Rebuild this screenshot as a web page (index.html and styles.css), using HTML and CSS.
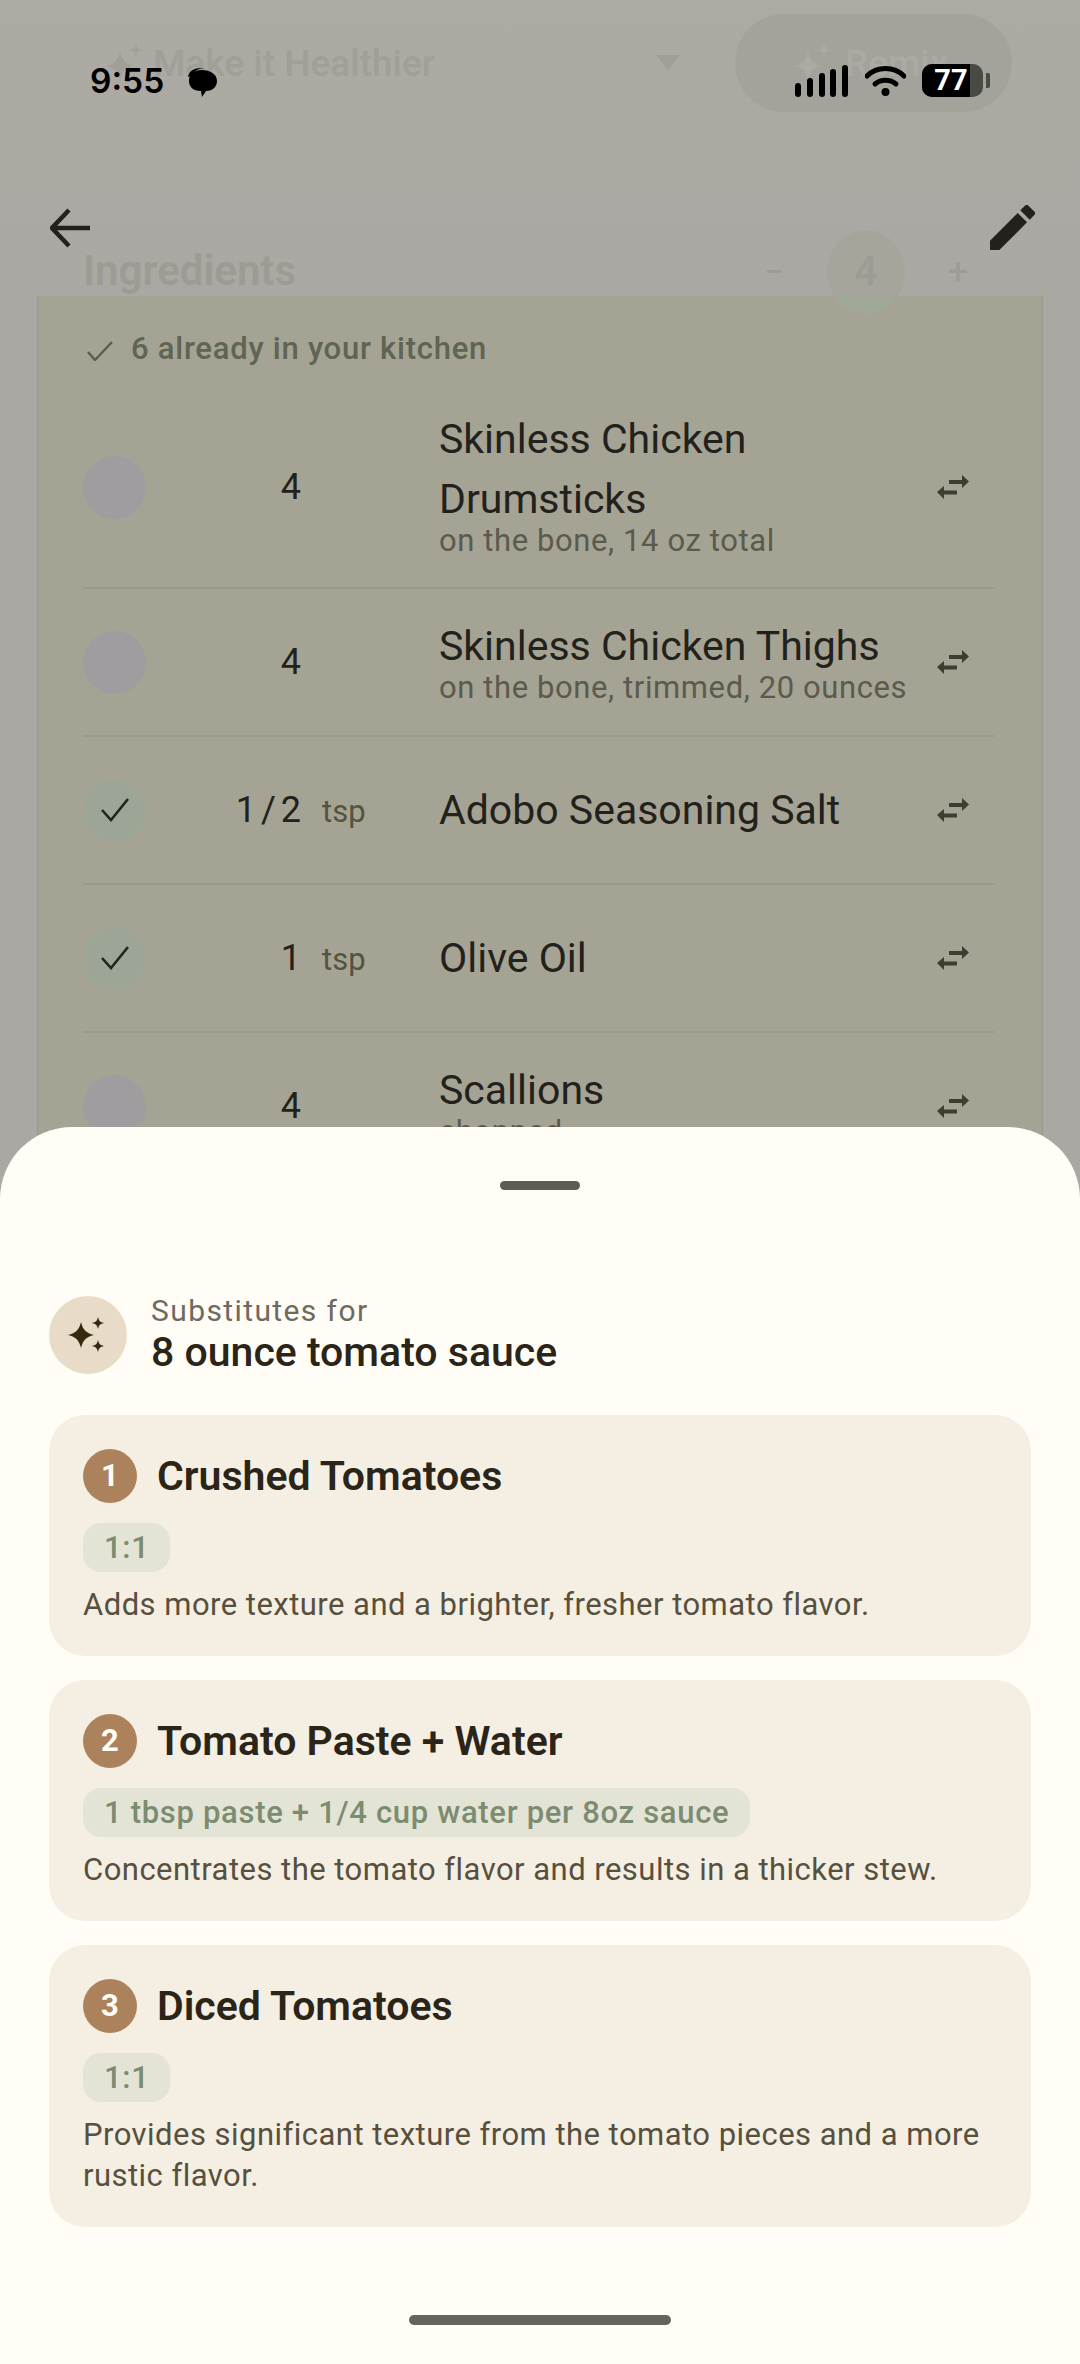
FILE: index.html
```html
<!DOCTYPE html>
<html>
<head>
  <meta charset="UTF-8">
  <title>Substitutes</title>
  <link rel="stylesheet" href="styles.css">
</head>
<body>

<div class="page">

  <div class="status">
    <span class="time">9:55</span>
    <svg class="bubble" viewBox="0 0 30 30"><path d="M1 9C2 3 7 0 14 0h5c-7 0-13 3-14 8z" fill="#000"/><path d="M15 2c8 0 15 4 15 11s-6 10-11 10l-4 6-1-6C6 23 2 19 2 13 2 6 7 2 15 2z" fill="#000"/></svg>
    <div class="status-right">
      <svg class="signal" viewBox="0 0 57 32"><g fill="#000"><rect x="0" y="18" width="6" height="14" rx="3"/><rect x="12" y="13" width="6" height="19" rx="3"/><rect x="24" y="8" width="6" height="24" rx="3"/><rect x="35" y="4" width="6" height="28" rx="3"/><rect x="47" y="0" width="6" height="32" rx="3"/></g></svg>
      <svg class="wifi" viewBox="0 0 41 32"><path d="M2 11C12 1 29 1 39 11" fill="none" stroke="#000" stroke-width="5" stroke-linecap="round"/><path d="M10 19c6-5 15-5 21 0" fill="none" stroke="#000" stroke-width="5" stroke-linecap="round"/><circle cx="20.5" cy="27" r="4" fill="#000"/></svg>
      <div class="battery"><span class="battery-level">77</span></div>
      <div class="battery-nub"></div>
    </div>
  </div>

  <div class="topbar">
    <svg class="back" viewBox="0 0 40 40"><path d="M19 2 2 20l17 18M2 20h38" fill="none" stroke="#23211b" stroke-width="4.500"/></svg>
    <svg class="edit" viewBox="3 3 18 18"><path fill="#23211b" d="M3 17.25V21h3.75L17.81 9.94l-3.75-3.75L3 17.25zM20.71 7.04a1 1 0 0 0 0-1.41l-2.34-2.34a1 1 0 0 0-1.41 0l-1.83 1.83 3.75 3.75 1.83-1.83z"/></svg>
  </div>

  <div class="actions">
    <div class="make">
      <svg class="ghost-star" viewBox="0 0 40 40"><path d="M15 8c2 10 5 13 14 15-9 2-12 5-14 15-2-10-5-13-14-15 9-2 12-5 14-15zM31 0c1 5 2 6 7 7-5 1-6 2-7 7-1-5-2-6-7-7 5-1 6-2 7-7z"/></svg>
      <span>Make it Healthier</span>
      <i class="tri"></i>
    </div>
    <div class="remix">
      <svg class="ghost-star" viewBox="0 0 40 40"><path d="M15 8c2 10 5 13 14 15-9 2-12 5-14 15-2-10-5-13-14-15 9-2 12-5 14-15zM31 0c1 5 2 6 7 7-5 1-6 2-7 7-1-5-2-6-7-7 5-1 6-2 7-7z"/></svg>
      <span>Remix</span>
    </div>
  </div>

  <div class="ing-head">
    <h2>Ingredients</h2>
    <div class="stepper">
      <span class="step">−</span>
      <span class="count">4</span>
      <span class="step">+</span>
    </div>
  </div>

  <div class="ing-card">
    <div class="kitchen">
      <svg class="tick-small" viewBox="0 0 26 20"><path d="M1 11l7 8L25 1" fill="none" stroke="#5a5f4e" stroke-width="2.400"/></svg>
      <span>6 already in your kitchen</span>
    </div>

    <div class="row row-tall">
      <div class="circle"></div>
      <div class="qty"><b>4</b></div>
      <div class="name">Skinless Chicken Drumsticks<small>on the bone, 14 oz total</small></div>
      <svg class="swap" viewBox="0 0 32 24"><path fill="#3f3d31" d="M12 5h13V0l7 6.500-7 6.500V9H12zM20 15.500H7V11l-7 6 7 7v-4.500h13z"/></svg>
    </div>
    <div class="row">
      <div class="circle"></div>
      <div class="qty"><b>4</b></div>
      <div class="name">Skinless Chicken Thighs<small>on the bone, trimmed, 20 ounces</small></div>
      <svg class="swap" viewBox="0 0 32 24"><path fill="#3f3d31" d="M12 5h13V0l7 6.500-7 6.500V9H12zM20 15.500H7V11l-7 6 7 7v-4.500h13z"/></svg>
    </div>
    <div class="row">
      <div class="circle done"><svg viewBox="0 0 28 24"><path d="M1 12l9 10L27 1" fill="none" stroke="#23241c" stroke-width="2.600"/></svg></div>
      <div class="qty"><b>1 / 2</b><em>tsp</em></div>
      <div class="name">Adobo Seasoning Salt</div>
      <svg class="swap" viewBox="0 0 32 24"><path fill="#3f3d31" d="M12 5h13V0l7 6.500-7 6.500V9H12zM20 15.500H7V11l-7 6 7 7v-4.500h13z"/></svg>
    </div>
    <div class="row">
      <div class="circle done"><svg viewBox="0 0 28 24"><path d="M1 12l9 10L27 1" fill="none" stroke="#23241c" stroke-width="2.600"/></svg></div>
      <div class="qty"><b>1</b><em>tsp</em></div>
      <div class="name">Olive Oil</div>
      <svg class="swap" viewBox="0 0 32 24"><path fill="#3f3d31" d="M12 5h13V0l7 6.500-7 6.500V9H12zM20 15.500H7V11l-7 6 7 7v-4.500h13z"/></svg>
    </div>
    <div class="row">
      <div class="circle"></div>
      <div class="qty"><b>4</b></div>
      <div class="name">Scallions<small>chopped</small></div>
      <svg class="swap" viewBox="0 0 32 24"><path fill="#3f3d31" d="M12 5h13V0l7 6.500-7 6.500V9H12zM20 15.500H7V11l-7 6 7 7v-4.500h13z"/></svg>
    </div>
  </div>

  <div class="sheet">
    <div class="handle"></div>

    <div class="sheet-head">
      <div class="spark">
        <svg viewBox="0 0 40 36"><path fill="#38280f" d="M13 5c2 8 5 11 13 13-8 2-11 5-13 13-2-8-5-11-13-13 8-2 11-5 13-13zM30 0c1 4 2 5 6 6-4 1-5 2-6 6-1-4-2-5-6-6 4-1 5-2 6-6zM30 23c1 4 2 5 6 6-4 1-5 2-6 6-1-4-2-5-6-6 4-1 5-2 6-6z"/></svg>
      </div>
      <div>
        <div class="for">Substitutes for</div>
        <div class="what">8 ounce tomato sauce</div>
      </div>
    </div>

    <div class="sub">
      <div class="sub-title"><span class="num">1</span><h3>Crushed Tomatoes</h3></div>
      <span class="chip">1:1</span>
      <p>Adds more texture and a brighter, fresher tomato flavor.</p>
    </div>
    <div class="sub">
      <div class="sub-title"><span class="num">2</span><h3>Tomato Paste + Water</h3></div>
      <span class="chip">1 tbsp paste + 1/4 cup water per 8oz sauce</span>
      <p>Concentrates the tomato flavor and results in a thicker stew.</p>
    </div>
    <div class="sub">
      <div class="sub-title"><span class="num">3</span><h3>Diced Tomatoes</h3></div>
      <span class="chip">1:1</span>
      <p>Provides significant texture from the tomato pieces and a more rustic flavor.</p>
    </div>

    <div class="home"></div>
  </div>

</div>

</body>
</html>
```

FILE: styles.css
```css
* {
  box-sizing: border-box;
}
body {
  margin: 0;
  font-family: Roboto, "Noto Sans", sans-serif;
}
.page {
  position: relative;
  width: 1080px;
  height: 2364px;
  overflow: hidden;
  background: linear-gradient(#acaaa3, #a9a8a2 320px);
}

/* status bar and toolbar sit over the scrolled content */
.status {
  position: absolute;
  top: 64px;
  left: 90px;
  width: 900px;
  height: 33px;
  z-index: 2;
  display: flex;
  align-items: center;
}
.time {
  font-family: Inter, Roboto, sans-serif;
  font-size: 33.500px;
  font-weight: 600;
  color: #000;
}
.bubble {
  width: 30px;
  height: 30px;
  margin-left: 23px;
  margin-top: 4px;
}
.status-right {
  margin-left: auto;
  display: flex;
  align-items: center;
}
.signal {
  width: 57px;
  height: 32px;
}
.wifi {
  width: 41px;
  height: 32px;
  margin-left: 13px;
}
.battery {
  width: 61px;
  height: 33px;
  margin-left: 16px;
  border-radius: 10px;
  overflow: hidden;
  background: #4a4a45;
}
.battery-level {
  display: block;
  width: 48px;
  height: 33px;
  background: #000;
  color: #fff;
  font-size: 29px;
  font-weight: 700;
  line-height: 33px;
  text-align: center;
  padding-left: 10px;
}
.battery-nub {
  width: 4px;
  height: 15px;
  margin-left: 3px;
  background: #4a4a45;
  border-radius: 0 2px 2px 0;
}
.topbar {
  position: absolute;
  top: 205px;
  left: 50px;
  width: 985px;
  z-index: 2;
  display: flex;
  justify-content: space-between;
  align-items: center;
}
.back {
  width: 40px;
  height: 40px;
}
.edit {
  width: 45px;
  height: 45px;
}

/* faded page behind the scrim */
.actions {
  height: 232px;
  padding: 14px 68px 0 105px;
  display: flex;
  justify-content: space-between;
  align-items: flex-start;
}
.make, .remix {
  display: flex;
  align-items: center;
  height: 98px;
  font-size: 37px;
  font-weight: 500;
  color: #a09f98;
}
.make {
  width: 575px;
}
.make span {
  margin-left: 8px;
}
.tri {
  margin-left: auto;
  width: 0;
  height: 0;
  border-left: 12px solid transparent;
  border-right: 12px solid transparent;
  border-top: 16px solid #a09f98;
}
.ghost-star {
  width: 40px;
  height: 40px;
  fill: #a09f98;
}
.remix {
  width: 277px;
  padding-left: 58px;
  border-radius: 49px;
  background: #a4a39b;
  color: #abaaa3;
}
.remix span {
  margin-left: 12px;
}
.remix .ghost-star {
  fill: #abaaa3;
}
.ing-head {
  position: relative;
  z-index: 1;
  height: 64px;
  padding: 8px 97px 0 83px;
  display: flex;
  justify-content: space-between;
  align-items: center;
}
.ing-head h2 {
  margin: 5px 0 0;
  font-size: 42px;
  font-weight: 600;
  color: #9d9c94;
}
.stepper {
  display: flex;
  align-items: center;
  margin-top: 8px;
  color: #9d9c94;
  font-size: 36px;
}
.step {
  width: 50px;
  text-align: center;
  font-weight: 400;
}
.count {
  width: 78px;
  height: 84px;
  margin: 0 28px;
  border-radius: 50%;
  background: linear-gradient(#a5a59c 67px, #a0a898 67px);
  text-align: center;
  line-height: 84px;
  font-size: 40px;
  font-weight: 600;
}
.ing-card {
  position: relative;
  margin: 0 37px;
  height: 900px;
  padding: 0 47px 0 45px;
  background: #a5a393;
  border-left: 1px solid #9b9a8c;
  border-right: 1px solid #9b9a8c;
}
.kitchen {
  height: 91px;
  padding-top: 14px;
  display: flex;
  align-items: center;
  font-size: 31px;
  font-weight: 500;
  letter-spacing: 0.750px;
  color: #5f6453;
}
.tick-small {
  width: 26px;
  height: 20px;
  margin: 4px 18px 0 4px;
}
.row {
  display: flex;
  align-items: center;
  height: 148px;
  border-bottom: 2px solid #9c9a8a;
}
.row-tall {
  height: 202px;
}
.circle {
  width: 63px;
  height: 63px;
  flex: none;
  border-radius: 50%;
  background: #9f9da0;
  display: flex;
  align-items: center;
  justify-content: center;
}
.circle.done {
  background: #9da696;
}
.circle svg {
  width: 28px;
  height: 24px;
}
.qty {
  width: 293px;
  flex: none;
  display: flex;
  align-items: baseline;
  font-size: 36px;
  color: #23211b;
}
.qty b {
  width: 155px;
  font-weight: 400;
  text-align: right;
  white-space: nowrap;
  word-spacing: -4px;
}
.qty em {
  margin-left: 21px;
  font-style: normal;
  font-size: 31px;
  color: #55533f;
}
.name {
  flex: 1;
  min-width: 0;
  font-size: 41px;
  line-height: 60px;
  color: #23211b;
  padding-right: 50px;
}
.row-tall .name {
  margin-top: -3px;
}
.name small {
  display: block;
  margin-top: -5px;
  margin-bottom: 5px;
  font-size: 31px;
  line-height: 33px;
  letter-spacing: 0.600px;
  color: #5b5a4d;
  white-space: nowrap;
}
.swap {
  width: 32px;
  height: 24px;
  flex: none;
  margin-right: 26px;
}

/* bottom sheet */
.sheet {
  position: absolute;
  left: 0;
  right: 0;
  top: 1127px;
  bottom: 0;
  z-index: 1;
  padding: 54px 49px 0;
  background: #fffdf6;
  border-radius: 72px 72px 0 0;
}
.handle {
  width: 80px;
  height: 9px;
  margin: 0 auto;
  border-radius: 5px;
  background: #5e5b52;
}
.sheet-head {
  display: flex;
  align-items: center;
  margin-top: 104px;
  margin-bottom: 39px;
}
.spark {
  width: 78px;
  height: 78px;
  flex: none;
  margin-right: 24px;
  border-radius: 50%;
  background: #e8dcc8;
  display: flex;
  align-items: center;
  justify-content: center;
}
.spark svg {
  width: 40px;
  height: 36px;
}
.for {
  font-size: 30px;
  line-height: 34px;
  letter-spacing: 1.400px;
  color: #6e6a62;
}
.what {
  font-size: 41px;
  line-height: 48px;
  font-weight: 500;
  color: #2b2418;
}
.sub {
  margin-bottom: 24px;
  padding: 34px 34px 31px;
  border-radius: 36px;
  background: #f4efe2;
}
.sub-title {
  display: flex;
  align-items: center;
  margin-bottom: 20px;
}
.num {
  width: 54px;
  height: 54px;
  flex: none;
  border-radius: 50%;
  background: #ab825c;
  color: #fffdf6;
  font-size: 31px;
  font-weight: 700;
  line-height: 54px;
  text-align: center;
}
.sub-title h3 {
  margin: 0 0 0 20px;
  font-size: 41px;
  font-weight: 600;
  color: #2b2418;
}
.chip {
  display: inline-block;
  height: 49px;
  padding: 0 21px;
  border-radius: 18px;
  background: #e4e4d6;
  color: #7c8c70;
  font-size: 31px;
  font-weight: 500;
  line-height: 49px;
  letter-spacing: 0.690px;
}
.sub p {
  margin: 12px 0 0;
  font-size: 31px;
  line-height: 41px;
  letter-spacing: 0.470px;
  color: #57503f;
}
.home {
  position: absolute;
  left: 409px;
  bottom: 39px;
  width: 262px;
  height: 10px;
  border-radius: 5px;
  background: #66645d;
}
```
